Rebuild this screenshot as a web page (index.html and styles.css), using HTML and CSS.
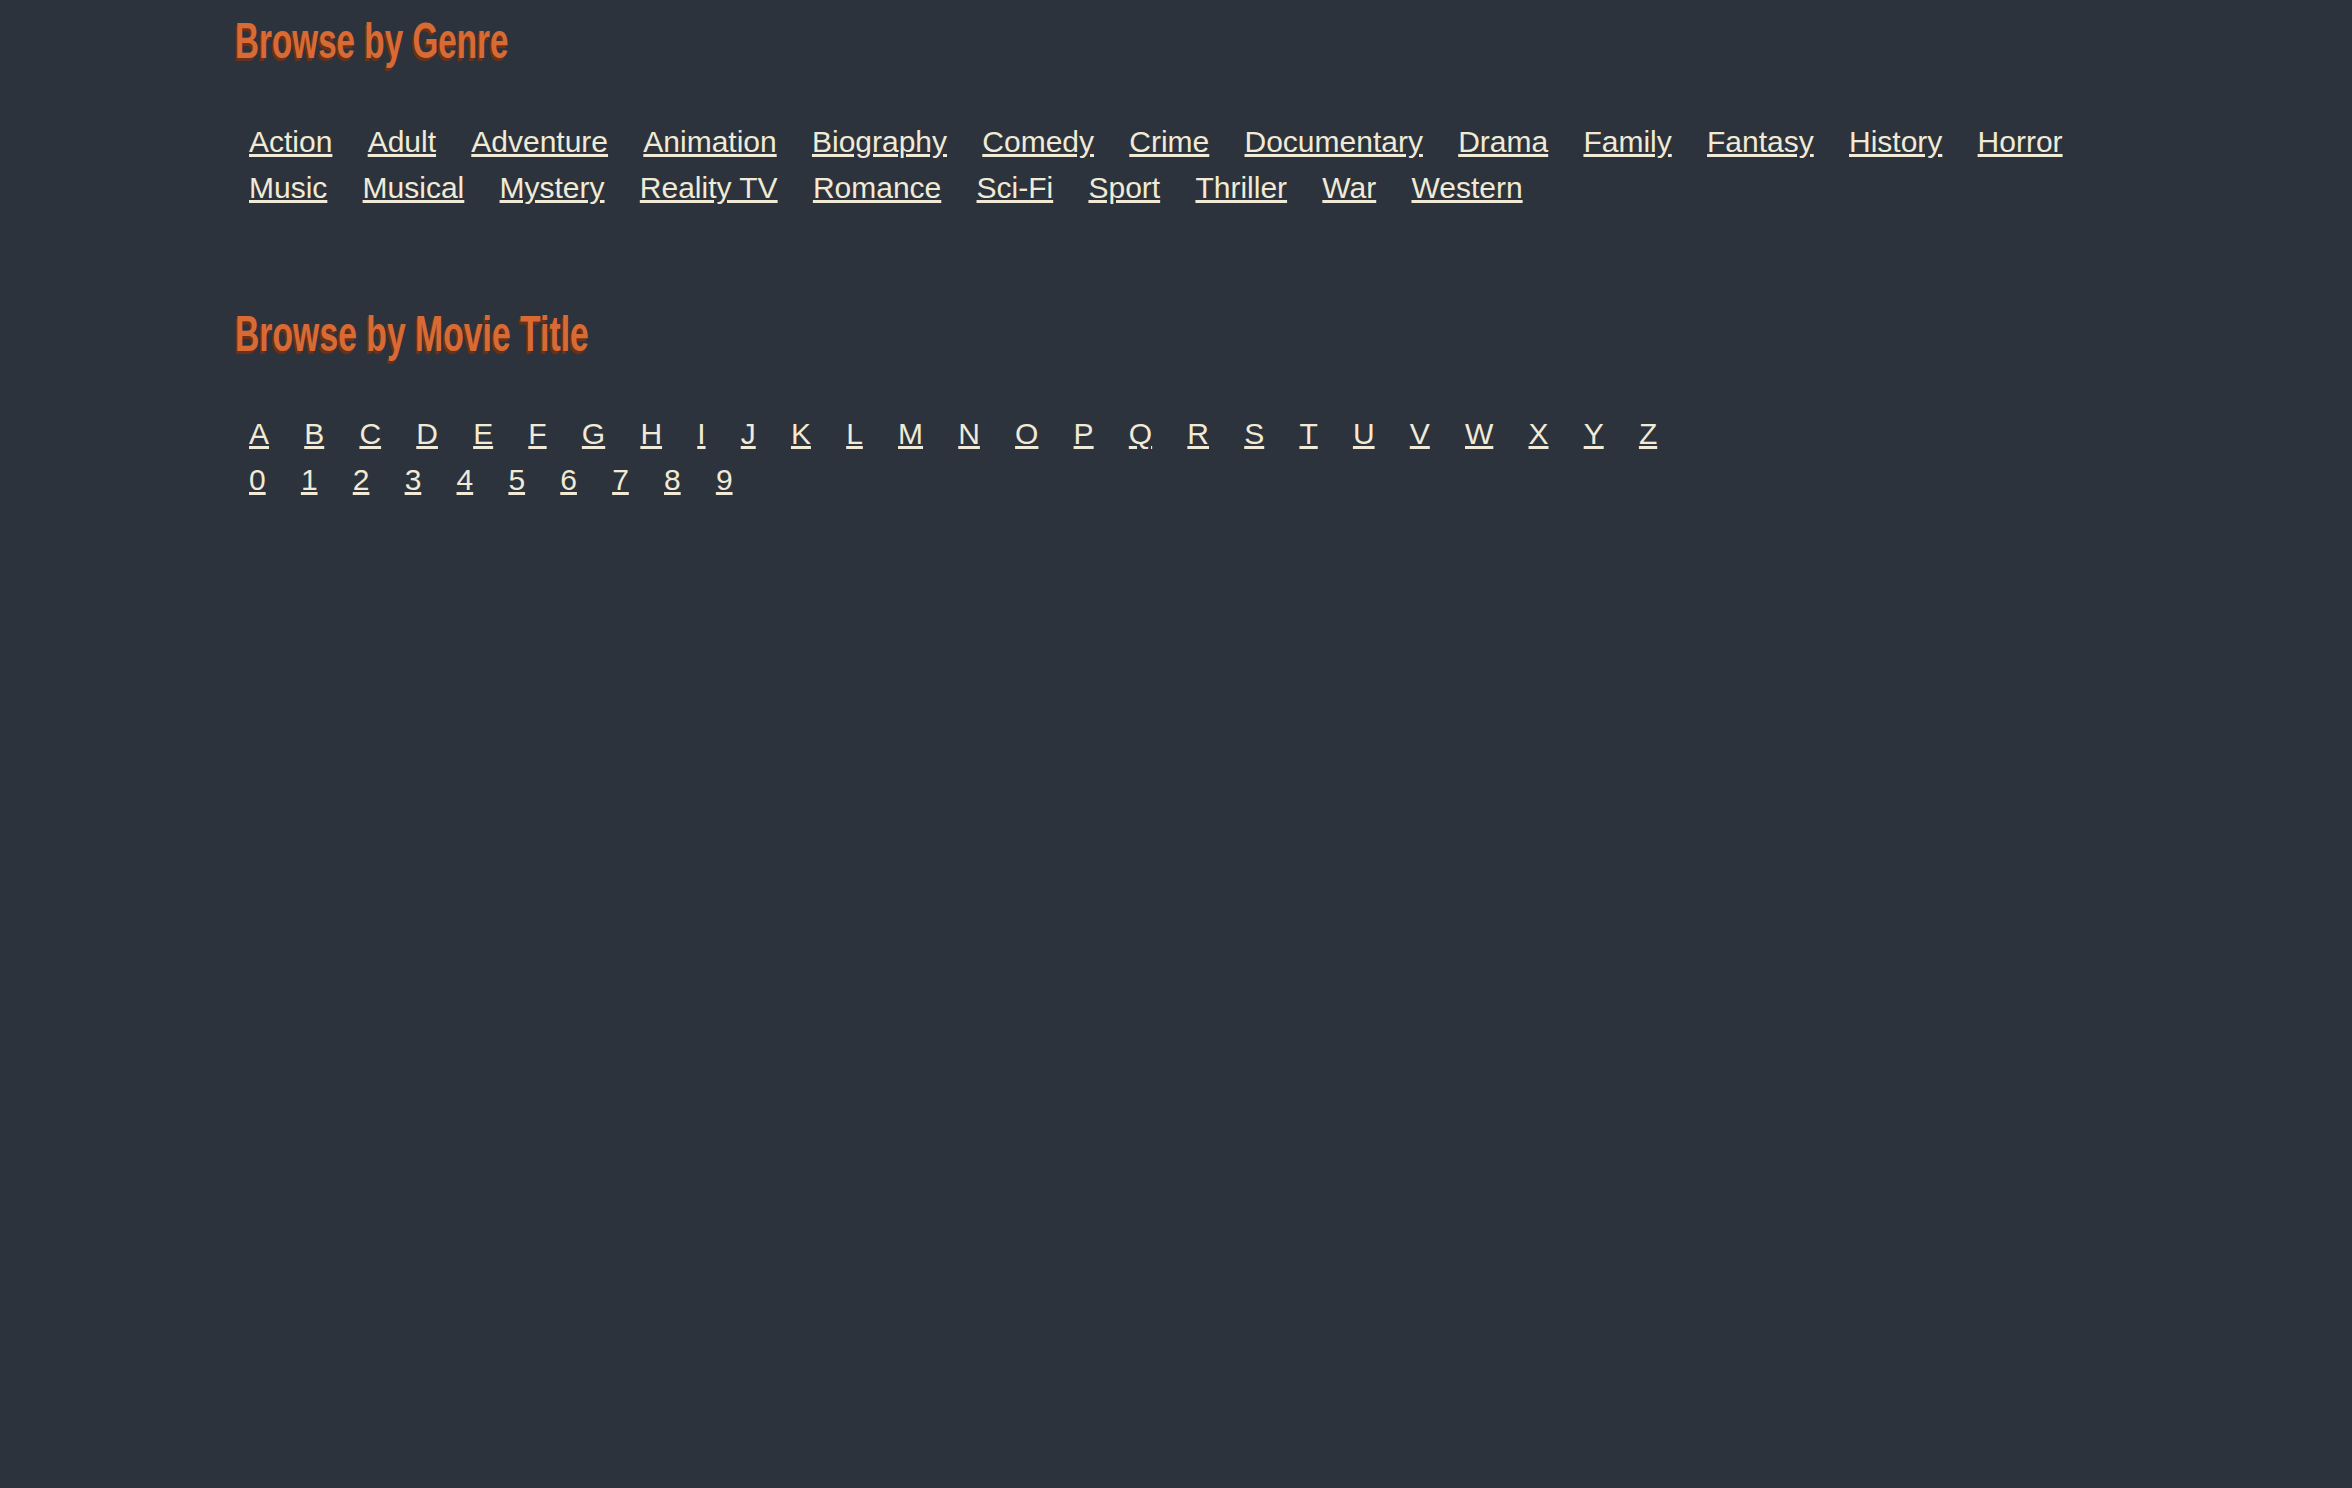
FILE: index.html
```html
<!DOCTYPE html>
<html lang="en">
<head>
<meta charset="utf-8">
<title>Browse</title>
<link rel="stylesheet" href="styles.css">
</head>
<body>
<main class="page">
  <section class="browse">
    <h2 class="browse-title">Browse by Genre</h2>
    <nav class="links">
      <a href="#">Action</a><a href="#">Adult</a><a href="#">Adventure</a><a href="#">Animation</a><a href="#">Biography</a><a href="#">Comedy</a><a href="#">Crime</a><a href="#">Documentary</a><a href="#">Drama</a><a href="#">Family</a><a href="#">Fantasy</a><a href="#">History</a><a href="#">Horror</a><a href="#">Music</a><a href="#">Musical</a><a href="#">Mystery</a><a href="#">Reality TV</a><a href="#">Romance</a><a href="#">Sci-Fi</a><a href="#">Sport</a><a href="#">Thriller</a><a href="#">War</a><a href="#">Western</a>
    </nav>
  </section>
  <section class="browse browse-next">
    <h2 class="browse-title">Browse by Movie Title</h2>
    <nav class="links">
      <a href="#">A</a><a href="#">B</a><a href="#">C</a><a href="#">D</a><a href="#">E</a><a href="#">F</a><a href="#">G</a><a href="#">H</a><a href="#">I</a><a href="#">J</a><a href="#">K</a><a href="#">L</a><a href="#">M</a><a href="#">N</a><a href="#">O</a><a href="#">P</a><a href="#">Q</a><a href="#">R</a><a href="#">S</a><a href="#">T</a><a href="#">U</a><a href="#">V</a><a href="#">W</a><a href="#">X</a><a href="#">Y</a><a href="#">Z</a>
    </nav>
    <nav class="links">
      <a href="#">0</a><a href="#">1</a><a href="#">2</a><a href="#">3</a><a href="#">4</a><a href="#">5</a><a href="#">6</a><a href="#">7</a><a href="#">8</a><a href="#">9</a>
    </nav>
  </section>
</main>
</body>
</html>
```
FILE: styles.css
```css
html, body {
  margin: 0;
  padding: 0;
  background: #2d333d;
  min-height: 100%;
}

body {
  font-family: "Liberation Sans", Arial, sans-serif;
  color: #f0ead6;
}

.page {
  max-width: 1882px;
  margin: 0 auto;
  padding-top: 11px;
}

.browse-title {
  margin: 0 0 48px;
  font-family: "Liberation Sans", Arial, sans-serif;
  font-weight: bold;
  font-size: 50px;
  line-height: 60px;
  color: #d86b34;
  text-shadow: -3px 3px 0 #6b3015;
  white-space: nowrap;
  transform: scaleX(0.665);
  transform-origin: left center;
}

.browse-next {
  margin-top: 93px;
}

.browse-next .browse-title {
  margin-bottom: 46.5px;
  transform: scaleX(0.675);
}

.links {
  display: flex;
  flex-wrap: wrap;
  column-gap: 35.25px;
  padding-left: 14px;
  font-size: 30px;
  line-height: 46px;
}

.browse-next .links {
  column-gap: 35.2px;
}

.links a {
  color: #f0ead6;
  text-decoration: underline;
  white-space: nowrap;
}
```
